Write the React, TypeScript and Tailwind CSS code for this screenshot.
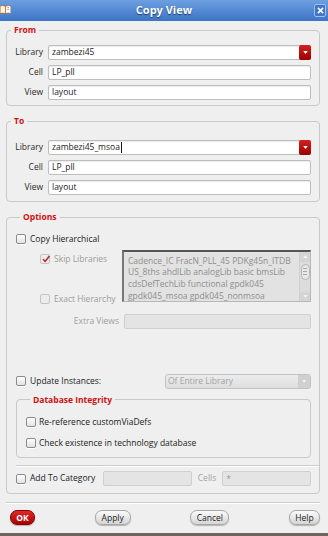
import { ReactNode } from "react";

function Check({ checked = false, disabled = false }: { checked?: boolean; disabled?: boolean }) {
  return (
    <span
      className={
        "relative inline-block w-[10px] h-[10px] rounded-[2px] border shrink-0 " +
        (disabled
          ? "border-[#c4c4c4] bg-[#ececec]"
          : "border-[#8c8c8c] bg-gradient-to-b from-[#ffffff] to-[#e2e2e2] shadow-[0_1px_0_#ffffff]")
      }
    >
      {checked && (
        <svg viewBox="0 0 10 10" className="absolute left-[0px] top-[-1px] w-[10px] h-[10px]">
          <path d="M2 5.2 L4.2 7.4 L8.4 2" fill="none" stroke="#c02828" strokeWidth="1.6" />
        </svg>
      )}
    </span>
  );
}

function Input({ value, disabled = false, caret = false }: { value?: string; disabled?: boolean; caret?: boolean }) {
  return (
    <div
      className={
        "h-[15px] flex-1 rounded-[2px] border flex items-center px-[3px] text-[8.5px] leading-none " +
        (disabled
          ? "border-[#cfcfcf] bg-[#e4e4e4] text-[#9a9a9a]"
          : "border-[#bdbdbd] bg-white text-[#222] shadow-[inset_0_1px_1px_rgba(0,0,0,0.08)]")
      }
    >
      {value}
      {caret && <span className="inline-block w-px h-[11px] bg-[#111] ml-px" />}
    </div>
  );
}

function Combo({ value, caret = false }: { value: string; caret?: boolean }) {
  return (
    <div className="h-[15px] flex-1 flex rounded-[2px] border border-[#bdbdbd] bg-white shadow-[inset_0_1px_1px_rgba(0,0,0,0.08)]">
      <div className="flex-1 flex items-center px-[3px] text-[8.5px] leading-none text-[#222]">
        {value}
        {caret && <span className="inline-block w-px h-[11px] bg-[#111] ml-px" />}
      </div>
      <div className="w-[12px] -my-px -mr-px rounded-[2px] bg-gradient-to-b from-[#d42020] to-[#9a0000] flex items-center justify-center">
        <svg viewBox="0 0 6 4" className="w-[5px] h-[3px]">
          <path d="M0 0 H6 L3 4 Z" fill="#fff" />
        </svg>
      </div>
    </div>
  );
}

function Row({ label, children }: { label: string; children: ReactNode }) {
  return (
    <div className="flex items-center gap-[5px]">
      <span className="w-[36px] text-right text-[8.5px] text-[#2a2a2a]">{label}</span>
      {children}
    </div>
  );
}

function Group({ title, className, children }: { title: string; className?: string; children: ReactNode }) {
  return (
    <fieldset className={"border border-[#c8c8c8] rounded-[4px] " + (className ?? "")}>
      <legend className="ml-[4px] px-[3px] text-[8.5px] font-bold text-[#d01010] leading-[12px]">{title}</legend>
      {children}
    </fieldset>
  );
}

function Btn({ label, red = false, className }: { label: string; red?: boolean; className: string }) {
  return (
    <button
      className={
        "h-[15px] rounded-[7px] border text-[8.5px] leading-none flex items-center justify-center shadow-[0_1px_1px_rgba(0,0,0,0.25)] " +
        className +
        (red
          ? " border-[#8a0000] bg-gradient-to-b from-[#e02828] to-[#a80000] text-white font-bold"
          : " border-[#a8a8a8] bg-gradient-to-b from-[#fafafa] to-[#d6d6d6] text-[#222]")
      }
    >
      {label}
    </button>
  );
}

export default function App() {
  return (
    <div className="w-[328px] h-[536px] bg-[#efefef] flex flex-col font-['Open_Sans',sans-serif] overflow-hidden border-b-[3px] border-[#6e655c]">
      <div className="h-[21px] shrink-0 bg-gradient-to-b from-[#6d9fe0] to-[#3c74c6] flex items-center relative">
        <svg viewBox="0 0 12 10" className="absolute left-[0px] top-[5px] w-[11px] h-[9px]">
          <path d="M0 1 Q3 0 6 1.5 V9.5 Q3 8.5 0 9.5 Z" fill="#fff4d8" stroke="#a35a1c" strokeWidth="0.7" />
          <path d="M6 1.5 Q9 0 12 1 V9.5 Q9 8.5 6 9.5 Z" fill="#fff" stroke="#a35a1c" strokeWidth="0.7" />
          <path d="M8 3 L10 2.6 M8 5 L10 4.6" stroke="#d0662a" strokeWidth="0.8" />
        </svg>
        <span className="flex-1 text-center text-white font-bold text-[11px] [text-shadow:0_1px_1px_#1a3b6e]">
          Copy View
        </span>
        <div className="absolute right-[2px] top-[4px] w-[12px] h-[13px] rounded-[2px] border border-[#9cc0ee] bg-[#3f76c6] flex items-center justify-center">
          <svg viewBox="0 0 8 8" className="w-[7px] h-[7px]">
            <path d="M1 1 L7 7 M7 1 L1 7" stroke="#fff" strokeWidth="1.8" />
          </svg>
        </div>
      </div>

      <div className="flex-1 flex flex-col px-[6px] pr-[8px]">
        <Group title="From" className="mt-[3px] pt-[9px] pb-[5px] pr-[8px]">
          <div className="flex flex-col gap-[5px]">
            <Row label="Library">
              <Combo value="zambezi45" />
            </Row>
            <Row label="Cell">
              <Input value="LP_pll" />
            </Row>
            <Row label="View">
              <Input value="layout" />
            </Row>
          </div>
        </Group>

        <Group title="To" className="mt-[9px] pt-[13px] pb-[6px] pr-[8px]">
          <div className="flex flex-col gap-[5px]">
            <Row label="Library">
              <Combo value="zambezi45_msoa" caret />
            </Row>
            <Row label="Cell">
              <Input value="LP_pll" />
            </Row>
            <Row label="View">
              <Input value="layout" />
            </Row>
          </div>
        </Group>

        <Group title="Options" className="mt-[9px] pt-[10px] pb-[7px] pl-[9px] pr-[8px]">
          <label className="flex items-center gap-[4px] text-[8.5px] text-[#222]">
            <Check />
            Copy Hierarchical
          </label>

          <div className="flex mt-[4px]">
            <div className="w-[106px] pl-[24px] flex flex-col justify-between pt-[3px]">
              <label className="flex items-center gap-[4px] text-[8.5px] text-[#9c9c9c]">
                <Check checked disabled />
                Skip Libraries
              </label>
              <label className="flex items-center gap-[4px] text-[8.5px] text-[#9c9c9c] translate-y-[4px]">
                <Check disabled />
                Exact Hierarchy
              </label>
            </div>
            <div className="flex-1 h-[52px] flex border border-[#b8b8b8] border-t-[2px] border-l-[2px] border-t-[#555] border-l-[#777] bg-[#e2e2e2]">
              <div className="flex-1 pl-[4px] pt-[3px] text-[8.5px] leading-[11.7px] text-[#8e8e8e] whitespace-nowrap overflow-hidden">
                <div>Cadence_IC FracN_PLL_45 PDKg45n_ITDB</div>
                <div>US_8ths ahdlLib analogLib basic bmsLib</div>
                <div>cdsDefTechLib functional gpdk045</div>
                <div>gpdk045_msoa gpdk045_nonmsoa</div>
              </div>
              <div className="w-[11px] flex flex-col items-center bg-[#dcdcdc] border-l border-[#cfcfcf]">
                <div className="w-[10px] h-[10px] flex items-center justify-center bg-[#d4d4d4] rounded-[2px]">
                  <svg viewBox="0 0 6 4" className="w-[5px] h-[3px]">
                    <path d="M0 4 H6 L3 0 Z" fill="#f2f2f2" />
                  </svg>
                </div>
                <div className="w-[9px] h-[16px] mt-[2px] rounded-[5px] border border-[#b4b4b4] bg-[#e8e8e8] flex flex-col items-center justify-center gap-[2px]">
                  <span className="w-[4px] h-px bg-[#a8a8a8]" />
                  <span className="w-[4px] h-px bg-[#a8a8a8]" />
                  <span className="w-[4px] h-px bg-[#a8a8a8]" />
                </div>
                <div className="flex-1" />
                <div className="w-[10px] h-[9px] flex items-center justify-center bg-[#d4d4d4] rounded-[2px]">
                  <svg viewBox="0 0 6 4" className="w-[5px] h-[3px]">
                    <path d="M0 0 H6 L3 4 Z" fill="#f2f2f2" />
                  </svg>
                </div>
              </div>
            </div>
          </div>

          <div className="flex items-center gap-[5px] mt-[12px]">
            <span className="w-[103px] text-right text-[8.5px] text-[#a0a0a0]">Extra Views</span>
            <Input disabled />
          </div>

          <div className="flex items-center mt-[45px]">
            <label className="flex items-center gap-[4px] text-[8.5px] text-[#222] w-[149px]">
              <Check />
              Update Instances:
            </label>
            <div className="flex-1 h-[15px] flex rounded-[3px] border border-[#c2c2c2] bg-gradient-to-b from-[#ececec] to-[#dedede]">
              <span className="flex-1 px-[2px] flex items-center text-[8.5px] text-[#a4a4a4]">Of Entire Library</span>
              <div className="w-[12px] flex items-center justify-center bg-[#d0d0d0] rounded-r-[2px]">
                <svg viewBox="0 0 6 4" className="w-[4px] h-[3px]">
                  <path d="M0 0 H6 L3 4 Z" fill="#f4f4f4" />
                </svg>
              </div>
            </div>
          </div>

          <Group title="Database Integrity" className="mt-[5px] pt-[10px] pb-[8px] pl-[9px]">
            <div className="flex flex-col gap-[8px]">
              <label className="flex items-center gap-[3px] text-[8.5px] text-[#222]">
                <Check />
                Re-reference customViaDefs
              </label>
              <label className="flex items-center gap-[3px] text-[8.5px] text-[#222]">
                <Check />
                Check existence in technology database
              </label>
            </div>
          </Group>

          <div className="h-px bg-[#cdcdcd] border-b border-white mt-[7px] -mr-[8px] box-content" />

          <div className="flex items-center mt-[4px] gap-[5px]">
            <label className="flex items-center gap-[4px] text-[8.5px] text-[#222] w-[82px]">
              <Check />
              Add To Category
            </label>
            <Input disabled />
            <span className="text-[8.5px] text-[#a4a4a4] px-[1px]">Cells</span>
            <Input disabled value="*" />
          </div>
        </Group>

        <div className="h-px bg-[#cdcdcd] border-b border-white mt-[8px] box-content" />

        <div className="flex items-center justify-between pl-[4px] mt-[6px]">
          <Btn label="OK" red className="w-[25px]" />
          <Btn label="Apply" className="w-[36px]" />
          <Btn label="Cancel" className="w-[39px]" />
          <Btn label="Help" className="w-[31px]" />
        </div>
      </div>
    </div>
  );
}
